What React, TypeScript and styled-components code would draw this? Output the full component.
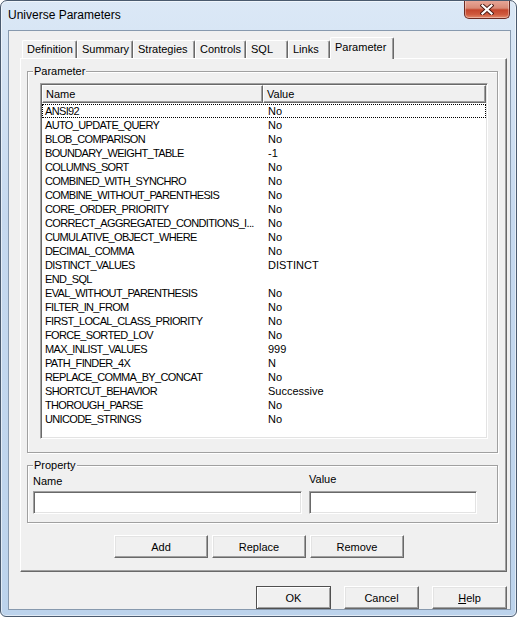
import React from 'react';
import styled, { createGlobalStyle, css } from 'styled-components';

const GlobalStyle = createGlobalStyle`
  html, body {
    margin: 0;
    padding: 0;
    background: #ffffff;
  }
  body {
    font-family: 'Liberation Sans', Arial, sans-serif;
    font-size: 11px;
    color: #000;
  }
  * {
    box-sizing: border-box;
  }
`;

const Window = styled.div`
  width: 517px;
  height: 617px;
  display: flex;
  flex-direction: column;
  border: 1px solid #4a5a6e;
  border-radius: 7px 7px 6px 6px;
  background: linear-gradient(180deg, #dbe8f6 0%, #c6d9ef 35%, #bcd3ec 100%);
  box-shadow: inset 0 0 0 1px rgba(255, 255, 255, 0.55);
  overflow: hidden;
`;

const TitleBar = styled.div`
  height: 29px;
  flex-shrink: 0;
  display: flex;
  align-items: flex-start;
  padding-left: 7px;
`;

const Title = styled.div`
  margin-top: 7px;
  font-size: 12px;
  line-height: 15px;
  color: #000;
`;

const CloseButton = styled.button`
  margin-left: auto;
  margin-right: 6px;
  width: 46px;
  height: 19px;
  margin-top: -1px;
  padding: 0;
  display: flex;
  align-items: center;
  justify-content: center;
  border: 1px solid #6b2a22;
  border-top: none;
  border-radius: 0 0 5px 5px;
  background: linear-gradient(180deg, #e9a99b 0%, #d98a76 45%, #c4462d 55%, #cf5a3e 80%, #e38a6c 100%);
  box-shadow: inset 0 0 0 1px rgba(255, 255, 255, 0.35);
`;

const Client = styled.div`
  flex: 1;
  min-height: 0;
  margin: 0 5px 6px 7px;
  background: #f0f0f0;
  border: 1px solid #8799ae;
  padding: 6px 3px 0 11px;
  display: flex;
  flex-direction: column;
  overflow: hidden;
`;

const TabRow = styled.div`
  display: flex;
  align-items: flex-end;
  height: 22px;
  margin-left: 2px;
  margin-bottom: -1px;
  position: relative;
  z-index: 1;
`;

const Tab = styled.div<{ $w: number; $active?: boolean }>`
  width: ${(p) => p.$w}px;
  height: 18px;
  margin-bottom: 1px;
  padding-left: 4px;
  line-height: 16px;
  white-space: nowrap;
  background: #f0f0f0;
  border-top: 1px solid #ffffff;
  border-left: 1px solid #ffffff;
  border-right: 1px solid #696969;
  border-radius: 2px 2px 0 0;
  box-shadow: inset -1px 0 0 #a0a0a0;
  ${(p) =>
    p.$active &&
    css`
      height: 22px;
      margin-bottom: 0;
      line-height: 18px;
    `}
`;

const Panel = styled.div`
  border-top: 1px solid #ffffff;
  border-left: 1px solid #ffffff;
  border-right: 1px solid #696969;
  border-bottom: 1px solid #696969;
  box-shadow: inset -1px -1px 0 #a0a0a0;
  padding: 6px 8px 13px 6px;
  display: flex;
  flex-direction: column;
`;

const GroupBox = styled.fieldset<{ $gap?: number }>`
  margin: ${(p) => p.$gap ?? 0}px 0 0 0;
  padding: 0;
  min-width: 0;
  border: 1px solid #a0a0a0;
  box-shadow: 1px 1px 0 #ffffff, inset 1px 1px 0 #ffffff;
`;

const Legend = styled.legend`
  margin-left: 5px;
  padding: 0 1px;
  line-height: 13px;
  background: #f0f0f0;
`;

const ListBody = styled.div`
  padding: 5px 9px 13px 12px;
`;

const ListView = styled.div`
  height: 356px;
  padding: 1px;
  background: #ffffff;
  border: 1px solid;
  border-color: #a0a0a0 #ffffff #ffffff #a0a0a0;
  box-shadow: inset 1px 1px 0 #696969, inset -1px -1px 0 #e3e3e3;
  overflow: hidden;
`;

const HeaderRow = styled.div`
  display: grid;
  grid-template-columns: 221px 1fr;
  height: 18px;
  margin-bottom: 1px;
`;

const HeaderCell = styled.div`
  padding-left: 3px;
  line-height: 16px;
  background: #f0f0f0;
  border-top: 1px solid #ffffff;
  border-left: 1px solid #ffffff;
  border-right: 1px solid #696969;
  border-bottom: 1px solid #696969;
  box-shadow: inset -1px -1px 0 #a0a0a0;
`;

const Row = styled.div<{ $focused?: boolean }>`
  display: grid;
  grid-template-columns: 221px 1fr;
  height: 14px;
  line-height: 14px;
  ${(p) =>
    p.$focused &&
    css`
      outline: 1px dotted #000;
      outline-offset: -1px;
    `}
`;

const NameCell = styled.div`
  padding-left: 3px;
  letter-spacing: -0.65px;
  white-space: nowrap;
  overflow: hidden;
`;

const ValueCell = styled.div`
  padding-left: 5px;
  white-space: nowrap;
`;

const PropertyBody = styled.div`
  display: grid;
  grid-template-columns: 269px 168px;
  column-gap: 7px;
  padding: 3px 0 8px 5px;
`;

const Field = styled.div<{ $raise?: number }>`
  display: flex;
  flex-direction: column;
  margin-top: ${(p) => -(p.$raise ?? 0)}px;
`;

const FieldLabel = styled.label<{ $drop?: number }>`
  line-height: 13px;
  margin-bottom: ${(p) => 3 + (p.$drop ?? 0)}px;
`;

const TextBox = styled.input`
  height: 23px;
  width: 100%;
  margin: 0;
  background: #ffffff;
  border: 1px solid;
  border-color: #a0a0a0 #ffffff #ffffff #a0a0a0;
  box-shadow: inset 1px 1px 0 #696969, inset -1px -1px 0 #e3e3e3;
  outline: none;
`;

const ActionRow = styled.div`
  display: flex;
  gap: 4px;
  margin-top: 12px;
  padding-left: 87px;
`;

const Button = styled.button<{ $w: number; $default?: boolean }>`
  width: ${(p) => p.$w}px;
  height: 23px;
  padding: 0;
  font-family: 'Liberation Sans', Arial, sans-serif;
  font-size: 11px;
  color: #000;
  background: #f0f0f0;
  border: 1px solid;
  border-color: #ffffff #696969 #696969 #ffffff;
  box-shadow: inset -1px -1px 0 #a0a0a0, inset 1px 1px 0 #e3e3e3;
  ${(p) =>
    p.$default &&
    css`
      border-color: #505050;
      box-shadow: inset 1px 1px 0 #ffffff, inset -1px -1px 0 #a0a0a0;
    `}
`;

const Footer = styled.div`
  display: flex;
  justify-content: flex-end;
  gap: 13px;
  margin-top: 14px;
  flex-shrink: 0;
`;

const Mnemonic = styled.span`
  text-decoration: underline;
`;

const tabs = [
  { label: 'Definition', w: 55 },
  { label: 'Summary', w: 56 },
  { label: 'Strategies', w: 62 },
  { label: 'Controls', w: 51 },
  { label: 'SQL', w: 42 },
  { label: 'Links', w: 42 },
  { label: 'Parameter', w: 64 },
];

const params: [string, string][] = [
  ['ANSI92', 'No'],
  ['AUTO_UPDATE_QUERY', 'No'],
  ['BLOB_COMPARISON', 'No'],
  ['BOUNDARY_WEIGHT_TABLE', '-1'],
  ['COLUMNS_SORT', 'No'],
  ['COMBINED_WITH_SYNCHRO', 'No'],
  ['COMBINE_WITHOUT_PARENTHESIS', 'No'],
  ['CORE_ORDER_PRIORITY', 'No'],
  ['CORRECT_AGGREGATED_CONDITIONS_I...', 'No'],
  ['CUMULATIVE_OBJECT_WHERE', 'No'],
  ['DECIMAL_COMMA', 'No'],
  ['DISTINCT_VALUES', 'DISTINCT'],
  ['END_SQL', ''],
  ['EVAL_WITHOUT_PARENTHESIS', 'No'],
  ['FILTER_IN_FROM', 'No'],
  ['FIRST_LOCAL_CLASS_PRIORITY', 'No'],
  ['FORCE_SORTED_LOV', 'No'],
  ['MAX_INLIST_VALUES', '999'],
  ['PATH_FINDER_4X', 'N'],
  ['REPLACE_COMMA_BY_CONCAT', 'No'],
  ['SHORTCUT_BEHAVIOR', 'Successive'],
  ['THOROUGH_PARSE', 'No'],
  ['UNICODE_STRINGS', 'No'],
];

const CloseGlyph = () => (
  <svg width="14" height="11" viewBox="0 0 14 11">
    <path
      d="M2.5 1.5 L11.5 9.5 M11.5 1.5 L2.5 9.5"
      stroke="#4a1a14"
      strokeWidth="4"
      strokeLinecap="square"
      fill="none"
    />
    <path
      d="M2.5 1.5 L11.5 9.5 M11.5 1.5 L2.5 9.5"
      stroke="#ffffff"
      strokeWidth="2.2"
      strokeLinecap="square"
      fill="none"
    />
  </svg>
);

const App = () => (
  <>
    <GlobalStyle />
    <Window>
      <TitleBar>
        <Title>Universe Parameters</Title>
        <CloseButton aria-label="Close">
          <CloseGlyph />
        </CloseButton>
      </TitleBar>
      <Client>
        <TabRow>
          {tabs.map((t) => (
            <Tab key={t.label} $w={t.w} $active={t.label === 'Parameter'}>
              {t.label}
            </Tab>
          ))}
        </TabRow>
        <Panel>
          <GroupBox>
            <Legend>Parameter</Legend>
            <ListBody>
              <ListView>
                <HeaderRow>
                  <HeaderCell>Name</HeaderCell>
                  <HeaderCell>Value</HeaderCell>
                </HeaderRow>
                {params.map(([name, value], i) => (
                  <Row key={name} $focused={i === 0}>
                    <NameCell>{name}</NameCell>
                    <ValueCell>{value}</ValueCell>
                  </Row>
                ))}
              </ListView>
            </ListBody>
          </GroupBox>
          <GroupBox $gap={6}>
            <Legend>Property</Legend>
            <PropertyBody>
              <Field>
                <FieldLabel>Name</FieldLabel>
                <TextBox />
              </Field>
              <Field $raise={2}>
                <FieldLabel $drop={2}>Value</FieldLabel>
                <TextBox />
              </Field>
            </PropertyBody>
          </GroupBox>
          <ActionRow>
            <Button $w={94}>Add</Button>
            <Button $w={94}>Replace</Button>
            <Button $w={94}>Remove</Button>
          </ActionRow>
        </Panel>
        <Footer>
          <Button $w={75} $default>
            OK
          </Button>
          <Button $w={75}>Cancel</Button>
          <Button $w={75}>
            <Mnemonic>H</Mnemonic>elp
          </Button>
        </Footer>
      </Client>
    </Window>
  </>
);

export default App;
